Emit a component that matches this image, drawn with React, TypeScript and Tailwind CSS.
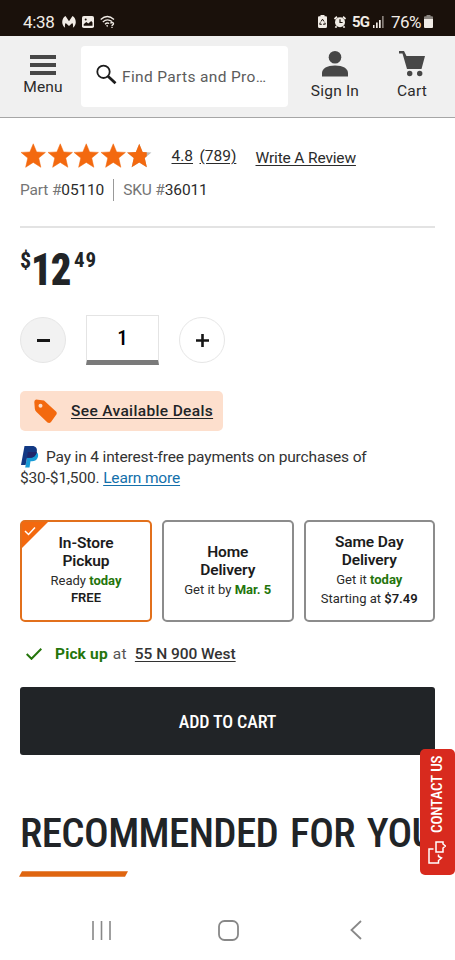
import React from 'react';

const deliveryOptions = [
  {
    id: 'pickup',
    title: ['In-Store', 'Pickup'],
    label: 'Ready',
    when: 'today',
    prefix: '',
    price: 'FREE',
    selected: true,
  },
  {
    id: 'home',
    title: ['Home', 'Delivery'],
    label: 'Get it by',
    when: 'Mar. 5',
    prefix: '',
    price: '',
    selected: false,
  },
  {
    id: 'same-day',
    title: ['Same Day', 'Delivery'],
    label: 'Get it',
    when: 'today',
    prefix: 'Starting at',
    price: '$7.49',
    selected: false,
  },
];

const starPath =
  'M13 0.8 L16.4 8.9 L25.2 9.4 L18.5 15 L20.6 24.3 L13 19.4 L5.4 24.3 L7.5 15 L0.8 9.4 L9.6 8.9 Z';

function StatusBar() {
  return (
    <div className="flex h-9 items-center bg-[#1a110b] pl-[23px] pr-[22px] pt-[7px] text-[#f1ece6]">
      <span className="w-[39px] text-[17px] leading-5 tracking-[-0.3px]">4:38</span>
      <svg className="h-3 w-[14px]" viewBox="0 0 14 12" fill="currentColor">
        <path d="M3.500 0C.7 1.600-.4 5.200.6 8.200c.4 1.500 1.200 2.700 2.500 3.500C2.700 9.500 2.900 8 3.700 7L7 10l3.300-3c.8 1 1 2.500.6 4.700 1.300-.8 2.100-2 2.500-3.500 1-3-.1-6.600-2.900-8.200L7 5.200z" />
      </svg>
      <svg className="ml-[6px] h-3 w-3" viewBox="0 0 12 12">
        <rect width="12" height="12" rx="1.800" fill="currentColor" />
        <path d="M1.700 9.800V8.300L4.300 6l2 1.600L9.200 4.900l1.300 1.500v3.400z" fill="#1a110b" />
        <circle cx="3.700" cy="3.500" r="1" fill="#1a110b" />
      </svg>
      <svg className="ml-[6px] h-[13px] w-[15px]" viewBox="0 0 15 13" fill="none" stroke="currentColor" strokeWidth="1.300">
        <path d="M.7 4.400Q7.300-1.400 14 4.400M2.800 6.900Q7.300 2.900 12 6.600M5 9.200Q7 7.300 9.200 8.500" />
        <path d="M6 10.600L8 10l-.6 2.300z" fill="currentColor" stroke="none" />
        <path d="M10.600 8.500c.5-1.600 3.200-1.200 2.900.4-.2 1-1.500 1-1.500 2M12 11.800v1.200" />
      </svg>
      <svg className="ml-auto h-[13px] w-[9px]" viewBox="0 0 9 13">
        <path d="M2.500 0h4v1.300H8Q9 1.300 9 2.500V11.500Q9 13 7.500 13h-6Q0 13 0 11.500v-9Q0 1.300 1 1.300h1.500z" fill="currentColor" />
        <path d="M3 6.500L4.500 4.200 6 6.500M6.800 7.600L7.300 9.200H5M3.800 9.300H1.700l.6-1.900" fill="none" stroke="#1a110b" />
      </svg>
      <svg className="ml-[7px] h-3 w-3" viewBox="0 0 12 12">
        <path d="M.5 3L3 .8M11.500 3L9 .8M2.500 10.200L1.500 11.700M9.500 10.200l1 1.500" stroke="currentColor" strokeWidth="1.800" />
        <circle cx="6" cy="6.300" r="5" fill="currentColor" />
        <path d="M6 3.300v3.200h2.600" fill="none" stroke="#1a110b" strokeWidth="1.200" />
      </svg>
      <span className="ml-[6px] w-[18px] text-[15px] font-bold leading-5 tracking-[-0.8px]">5G</span>
      <svg className="ml-[3px] h-[12px] w-[11px]" viewBox="0 0 11 12" fill="currentColor">
        <rect y="9" width="1.500" height="3" />
        <rect x="3" y="6.500" width="1.700" height="5.500" />
        <rect x="6" y="4" width="1.700" height="8" />
        <rect x="9" y="0" width="1.700" height="12" opacity=".5" />
      </svg>
      <span className="ml-[7px] w-[31px] text-[17px] leading-5 tracking-[-0.6px]">76%</span>
      <svg className="ml-[2px] h-[13px] w-[9px]" viewBox="0 0 9 13">
        <path d="M2.500 0h4v1.300H8Q9 1.300 9 2.500V4H0V2.500Q0 1.300 1 1.300h1.500z" fill="#8a8580" />
        <path d="M0 4h9v8q0 1-1 1H1q-1 0-1-1z" fill="currentColor" />
      </svg>
    </div>
  );
}

function Header() {
  return (
    <header className="flex h-[82px] border-b border-[#a6a6a6] bg-[#f0f0f0] text-[15.500px] leading-5 tracking-[0.2px] text-[#2b2b2b]">
      <button className="flex w-[81px] flex-col items-center pl-[5px] pt-[19px]">
        <svg className="h-5 w-[26px]" viewBox="0 0 26 20" fill="#474747">
          <rect width="26" height="4" />
          <rect y="8" width="26" height="4" />
          <rect y="16" width="26" height="4" />
        </svg>
        <span className="mt-[2px]">Menu</span>
      </button>
      <div className="mt-[10px] flex h-[61px] w-[207px] items-center rounded-[4px] bg-white pl-[14px]">
        <svg className="-mt-1 h-[22px] w-[22px]" viewBox="0 0 22 22" fill="none" stroke="#1c1c1c">
          <circle cx="8.500" cy="7.800" r="6.200" strokeWidth="1.800" />
          <path d="M13 12.300L20.500 19.300" strokeWidth="2.800" />
        </svg>
        <span className="ml-[5px] mt-px whitespace-nowrap tracking-[0.35px] text-[#5c5c5c]">Find Parts and Pro…</span>
      </div>
      <button className="ml-[17px] flex w-[60px] flex-col items-center pt-[15px]">
        <svg className="h-[26px] w-[26px]" viewBox="0 0 26 26" fill="#474747">
          <circle cx="13" cy="6.300" r="6.300" />
          <path d="M0 25.500V22C0 17.500 5 14.500 13 14.500S26 17.500 26 22v3.500z" />
        </svg>
        <span className="mt-1 whitespace-nowrap">Sign In</span>
      </button>
      <button className="ml-[17px] flex w-[60px] flex-col items-center pt-[15px]">
        <svg className="h-[26px] w-[26px]" viewBox="0 0 26 26" fill="#474747">
          <path d="M0 0h5l2.500 5H26l-3.500 13H8L3.500 2.500H0z" />
          <circle cx="10.700" cy="22.500" r="2.700" />
          <circle cx="20.700" cy="22.500" r="2.700" />
        </svg>
        <span className="mt-1">Cart</span>
      </button>
    </header>
  );
}

function Rating() {
  return (
    <div className="flex h-[26px] items-center text-[15.500px] leading-5 text-[#2b2b2b]">
      <div className="flex">
        {[1, 2, 3, 4].map((n) => (
          <svg key={n} className="h-[26px] w-[26.500px]" viewBox="0 0 26 26">
            <path d={starPath} fill="#f3690f" stroke="#f3690f" strokeWidth=".5" strokeLinejoin="round" />
          </svg>
        ))}
        <svg className="h-[26px] w-[26.500px]" viewBox="0 0 26 26">
          <path d={starPath} fill="#b9bcbd" />
          <path
            d="M13 0.8 L16.4 8.900 L20.500 9.130 L20.500 13.330 L18.500 15 L20.500 23.860 L20.500 24.230 L13 19.400 L5.400 24.300 L7.500 15 L0.800 9.400 L9.600 8.900 Z"
            fill="#f3690f"
          />
        </svg>
      </div>
      <a className="ml-[19px] w-7 underline underline-offset-2">4.8</a>
      <a className="w-[56px] underline underline-offset-2">(789)</a>
      <a className="mt-1 whitespace-nowrap tracking-[-0.150px] underline underline-offset-2">Write A Review</a>
    </div>
  );
}

function Quantity() {
  return (
    <div className="mt-6 flex h-[50px] items-center">
      <button className="flex h-[46px] w-[46px] items-center justify-center rounded-full border border-[#e6e6e6] bg-[#f2f2f2]">
        <span className="h-[3px] w-[13px] bg-[#161616]" />
      </button>
      <div className="ml-5 flex h-[50px] w-[73px] items-center justify-center border border-b-[5px] border-[#e4e4e4] border-b-[#7a7a7a] pt-[2px] text-[21px] text-black">
        <span className="font-['Roboto_Condensed',Roboto,sans-serif] font-medium">1</span>
      </div>
      <button className="ml-5 flex h-[46px] w-[46px] items-center justify-center rounded-full border border-[#e6e6e6]">
        <svg className="h-[13px] w-[13px]" viewBox="0 0 13 13" stroke="#161616" strokeWidth="2.600">
          <path d="M0 6.500h13M6.500 0v13" />
        </svg>
      </button>
    </div>
  );
}

function PayPalLogo() {
  return (
    <svg className="absolute left-px -top-px h-[22px] w-[18px]" viewBox="0 0 18 22">
      <path d="M7 6h8.500c2 1.200 2 4 1 6-1 2.200-3 3.200-5.500 3.200H9.500L8.500 21.500H4.200z" fill="#179bd7" />
      <path d="M3.500 0H11c4 0 5.500 2.500 4.800 6-.8 4-3.500 5.800-7 5.800H6L4.600 19H0z" fill="#123984" />
      <path d="M6.800 6h8.900c-.8 4-3.400 5.800-6.900 5.800H6z" fill="#20266b" />
    </svg>
  );
}

export default function App() {
  return (
    <div className="relative h-[960px] w-[455px] overflow-hidden bg-white font-[Roboto,sans-serif] text-[#2b2b2b]">
      <StatusBar />
      <Header />
      <main className="px-5 pt-[25px]">
        <Rating />
        <div className="mt-[9px] flex h-6 items-center whitespace-nowrap text-[15.500px] leading-5 tracking-[-0.150px] text-[#757575]">
          <span>
            Part #<span className="text-[#2b2b2b]">05110</span>
          </span>
          <span className="ml-[9px] mr-[9px] h-[22px] w-px bg-[#999]" />
          <span>
            SKU #<span className="text-[#2b2b2b]">36011</span>
          </span>
        </div>
        <div className="mt-[24px] h-[2px] bg-[#e3e3e3]" />
        <div className="mt-[21px] flex h-[42px] items-start font-['Roboto_Condensed',Roboto,sans-serif] font-bold text-[#212427]">
          <span className="w-[11px] text-[22px] leading-6">$</span>
          <span className="w-[43px] origin-left scale-x-[0.9] text-[45px] font-black leading-[41px] tracking-[-1px]">12</span>
          <span className="text-[21px] leading-[22px] tracking-[1px]">49</span>
        </div>
        <Quantity />
        <div className="mt-[26px] flex h-10 w-[203px] items-center rounded-[5px] bg-[#fddfcd] pl-[14px]">
          <svg className="h-[25px] w-[23px]" viewBox="0 0 23 25">
            <path d="M2 0.500L10 1.500 22 12.500Q23.500 14 22 16L17 23Q15.500 24.500 13.500 23.500L2.500 13Q1 11.500.8 9.500L.3 3Q.3 1 2 .5z" fill="#f3690f" />
            <circle cx="6.500" cy="6.700" r="2" fill="#fddfcd" />
          </svg>
          <a className="ml-[14px] mt-[2px] whitespace-nowrap text-[15.500px] font-medium tracking-[0.350px] text-[#212427] underline underline-offset-2">
            See Available Deals
          </a>
        </div>
        <div className="relative mt-4 h-[43px] whitespace-nowrap text-[15.500px] leading-[21px] tracking-[-0.150px] text-[#333]">
          <PayPalLogo />
          <p className="pl-[26px]">Pay in 4 interest-free payments on purchases of</p>
          <p>
            $30-$1,500. <a className="text-[#1370ab] underline underline-offset-2">Learn more</a>
          </p>
        </div>
        <div className="mt-[30px] flex gap-[10px]">
          {deliveryOptions.map((option) => (
            <button
              key={option.id}
              className={
                option.selected
                  ? 'relative flex h-[102px] w-[132px] flex-col items-center justify-center rounded-[5px] border-[2.500px] border-[#e2701c] pb-[2px]'
                  : 'relative flex h-[102px] w-[131.500px] flex-col items-center justify-center rounded-[5px] border-[2.500px] border-[#8c8c8c] pb-[2px]'
              }
            >
              {option.selected && (
                <svg className="absolute left-0 top-0 h-[26px] w-[26px]" viewBox="0 0 26 26">
                  <path d="M0 0h26L0 26z" fill="#f3690f" />
                  <path d="M3 9l3.500 3.500L13 5.500" fill="none" stroke="#fff" strokeWidth="1.500" />
                </svg>
              )}
              <span className="text-[15.500px] font-semibold leading-[18px] tracking-[-0.100px] text-[#1c1c1c]">
                {option.title[0]}
                <br />
                {option.title[1]}
              </span>
              <span className="mt-[2px] whitespace-nowrap text-[13px] leading-[17px]">
                {option.label} <b className="font-bold text-[#24750b]">{option.when}</b>
              </span>
              {option.price && (
                <span className={option.prefix ? 'mt-[2px] whitespace-nowrap text-[13px] leading-[18px]' : 'whitespace-nowrap text-[13px] leading-[18px]'}>
                  {option.prefix} <b className="font-semibold text-[#1c1c1c]">{option.price}</b>
                </span>
              )}
            </button>
          ))}
        </div>
        <div className="mt-[22px] flex h-5 items-center whitespace-nowrap text-[15.500px] leading-5 text-[#555]">
          <svg className="ml-[6px] h-3 w-4" viewBox="0 0 16 12" fill="none" stroke="#24750b" strokeWidth="2">
            <path d="M.7 6l4.800 4.800L15.300.8" />
          </svg>
          <b className="ml-[13px] font-bold tracking-[0.150px] text-[#24750b]">Pick up</b>
          <span className="ml-[5px] tracking-[0.300px]">at</span>
          <a className="ml-2 font-medium tracking-[-0.050px] text-[#333] underline underline-offset-2">55 N 900 West</a>
        </div>
        <button className="mt-[23px] flex h-[68px] w-full items-center justify-center rounded-[3px] bg-[#212427] font-['Roboto_Condensed',Roboto,sans-serif] text-[18px] font-medium tracking-[-0.100px] text-white">
          ADD TO CART
        </button>
        <h2 className="mt-[56px] h-11 whitespace-nowrap font-['Roboto_Condensed',Roboto,sans-serif] text-[41px] font-medium leading-[44px] tracking-[-0.600px] [word-spacing:3px] text-[#212427]">
          RECOMMENDED FOR YOU
        </h2>
        <svg className="-ml-px mt-[16px] h-[6px] w-[109px]" viewBox="0 0 109 6">
          <path d="M3 .3H109L106 5.700H0z" fill="#df6510" />
        </svg>
      </main>
      <nav className="mt-[42px] flex h-[22px] items-center">
        <svg className="ml-[92px] h-[19px] w-[19px]" viewBox="0 0 19 19" stroke="#888" strokeWidth="1.600">
          <path d="M1 0v19M9.500 0v19M18 0v19" />
        </svg>
        <svg className="ml-[107px] h-[21px] w-[21px]" viewBox="0 0 21 21">
          <rect x="1" y="1" width="19" height="19" rx="5.500" fill="none" stroke="#888" strokeWidth="1.800" />
        </svg>
        <svg className="ml-[111px] h-5 w-3" viewBox="0 0 12 20" fill="none" stroke="#888" strokeWidth="1.800">
          <path d="M11 1L1.500 10 11 19" />
        </svg>
      </nav>
      <button className="absolute right-0 top-[749px] flex h-[126px] w-[35.500px] flex-col items-center rounded-[5px] bg-[#d82a1e] pt-[7px] text-white">
        <span className="h-[77px] rotate-180 whitespace-nowrap font-['Roboto_Condensed',Roboto,sans-serif] text-[15px] font-medium leading-[18px] tracking-[-0.100px] [writing-mode:vertical-rl]">
          CONTACT US
        </span>
        <svg className="mt-2 h-[23px] w-[18px]" viewBox="0 0 18 23" fill="none" stroke="#fff" strokeWidth="1.500">
          <path d="M5.500 8H1v14h9.500v-2.500l3-2.500-3-1.500v-2" />
          <path d="M8 1h7v2l2.500 2L15 7v4H8z" />
        </svg>
      </button>
    </div>
  );
}
